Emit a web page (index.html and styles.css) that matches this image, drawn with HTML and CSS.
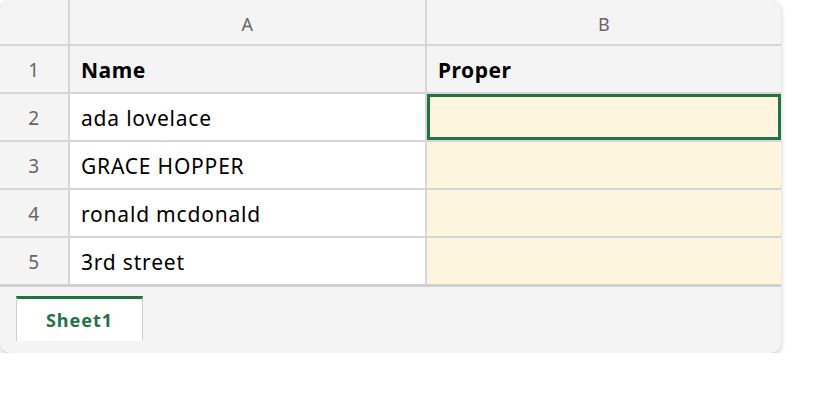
FILE: index.html
```html
<!DOCTYPE html>
<html>
  <head>
    <meta charset="UTF-8">
    <title>Sheet</title>
    <link rel="stylesheet" href="styles.css">
  </head>
  <body>
  <div id="book">
    <div class="grid">
      <div class="corner"></div>
      <div class="colhead">A</div>
      <div class="colhead">B</div>

      <div class="rowhead">1</div>
      <div class="cell head">Name</div>
      <div class="cell head">Proper</div>

      <div class="rowhead">2</div>
      <div class="cell">ada lovelace</div>
      <div class="cell out selected"></div>

      <div class="rowhead">3</div>
      <div class="cell">GRACE HOPPER</div>
      <div class="cell out"></div>

      <div class="rowhead">4</div>
      <div class="cell">ronald mcdonald</div>
      <div class="cell out"></div>

      <div class="rowhead">5</div>
      <div class="cell">3rd street</div>
      <div class="cell out"></div>
    </div>
    <div id="tabs">
      <div class="tab">Sheet1</div>
    </div>
  </div>
  </body>
</html>
```
FILE: styles.css
```css
/* spreadsheet look */
body {
  margin: 0;
  background: #fff;
  font-family: "Noto Sans", "Open Sans", sans-serif;
}
#book {
  width: 781px;
  height: 353px;
  border-radius: 10px;
  overflow: hidden;
  background: #f4f4f4;
  box-shadow: 0 2px 5px rgba(0, 0, 0, 0.22);
}
.grid {
  display: grid;
  grid-template-columns: 68px 355px 354px;
  grid-template-rows: 44px repeat(5, 46px);
  gap: 2px;
  background: #d6d6d6;
  border-bottom: 3px solid #d0d0d0;
}
.corner, .colhead, .rowhead {
  background: #f4f4f4;
  color: #666;
  display: flex;
  align-items: center;
  justify-content: center;
}
.colhead {
  font-size: 18px;
  letter-spacing: 0.5px;
  padding-top: 4px;
}
.rowhead {
  font-size: 19px;
  letter-spacing: 0.5px;
  padding-top: 2px;
}
.cell {
  background: #fff;
  color: #000;
  font-size: 21px;
  letter-spacing: 0.8px;
  padding: 2px 11px 0;
  display: flex;
  align-items: center;
}
.cell.head {
  background: #f4f4f4;
  font-weight: bold;
  letter-spacing: 0.5px;
}
.cell.out {
  background: #fdf5de;
}
.selected {
  border: 3px solid #217346;
}
#tabs {
  padding: 9px 16px 0;
  height: 58px;
}
.tab {
  width: 125px;
  height: 42px;
  box-sizing: content-box;
  background: #fff;
  border-top: 3px solid #217346;
  border-left: 1px solid #cfcfcf;
  border-right: 1px solid #cfcfcf;
  color: #217346;
  font-weight: bold;
  font-size: 18px;
  letter-spacing: 1px;
  display: flex;
  align-items: center;
  justify-content: center;
}
```
